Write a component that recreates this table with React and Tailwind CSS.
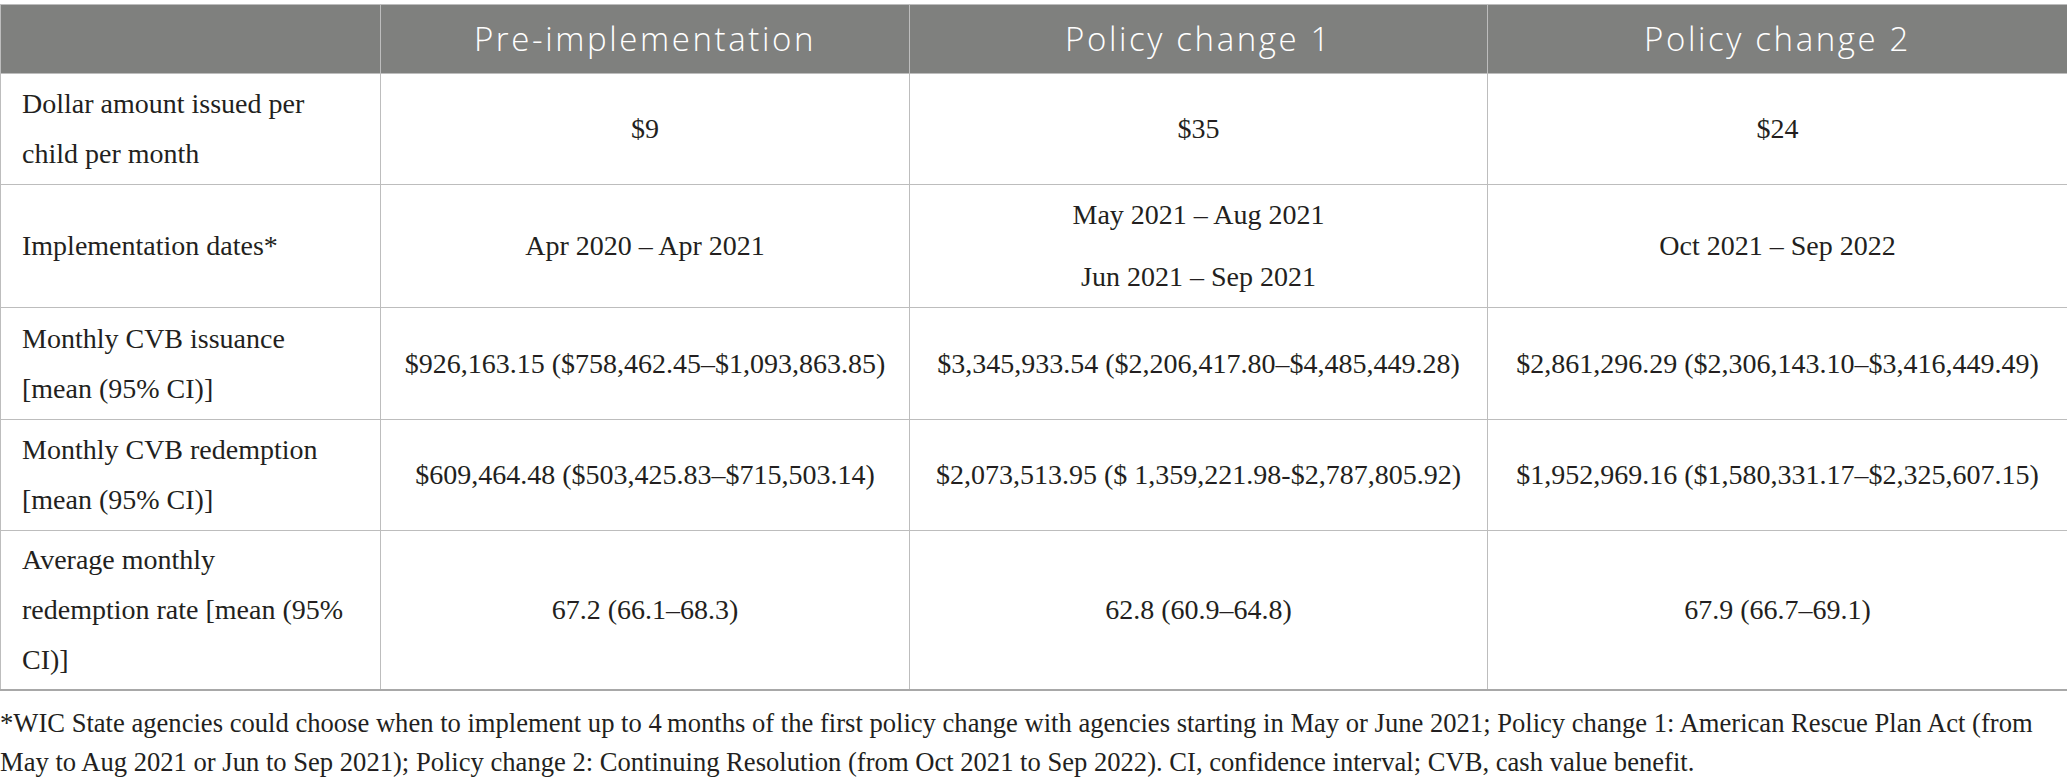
export default function App() {
  const serif = { fontFamily: '"Liberation Serif", "Times New Roman", serif' };
  const rows = [
    { h: 'h-[111px]', label: ['Dollar amount issued per', 'child per month'], vals: [['$9'], ['$35'], ['$24']] },
    { h: 'h-[123px]', label: ['Implementation dates*'], vals: [['Apr 2020 – Apr 2021'], ['May 2021 – Aug 2021', 'Jun 2021 – Sep 2021'], ['Oct 2021 – Sep 2022']] },
    { h: 'h-[112px]', label: ['Monthly CVB issuance', '[mean (95% CI)]'], vals: [['$926,163.15 ($758,462.45–$1,093,863.85)'], ['$3,345,933.54 ($2,206,417.80–$4,485,449.28)'], ['$2,861,296.29 ($2,306,143.10–$3,416,449.49)']] },
    { h: 'h-[111px]', label: ['Monthly CVB redemption', '[mean (95% CI)]'], vals: [['$609,464.48 ($503,425.83–$715,503.14)'], ['$2,073,513.95 ($ 1,359,221.98-$2,787,805.92)'], ['$1,952,969.16 ($1,580,331.17–$2,325,607.15)']] },
    { h: 'h-[159px]', label: ['Average monthly', 'redemption rate [mean (95%', 'CI)]'], vals: [['67.2 (66.1–68.3)'], ['62.8 (60.9–64.8)'], ['67.9 (66.7–69.1)']] },
  ];
  return (
    <div className="w-[2067px] bg-white pt-[4px]">
      <table className="w-[2067px] table-fixed border-collapse">
        <colgroup>
          <col className="w-[380px]" />
          <col className="w-[529px]" />
          <col className="w-[578px]" />
          <col className="w-[580px]" />
        </colgroup>
        <thead>
          <tr className="h-[69px] bg-[#7f807e]">
            {['', 'Pre-implementation', 'Policy change 1', 'Policy change 2'].map((t, i) => (
              <th
                key={i}
                className="border-[1.5px] border-[#bdbdbd] text-center align-middle text-[33px] font-[350] tracking-[2.6px] text-white"
                style={{ fontFamily: '"Open Sans", "Noto Sans", sans-serif' }}
              >
                {t}
              </th>
            ))}
          </tr>
        </thead>
        <tbody>
          {rows.map((r, ri) => (
            <tr key={ri} className={r.h}>
              <td
                className={`border-[1.5px] border-[#bdbdbd] pl-[21px] pr-2 align-middle text-[28px] leading-[50px] text-[#231f20] ${ri === 4 ? 'border-b-2 border-b-[#a8a8a8]' : ''}`}
                style={serif}
              >
                {r.label.map((l, li) => (
                  <div key={li}>{l}</div>
                ))}
              </td>
              {r.vals.map((v, vi) => (
                <td
                  key={vi}
                  className={`border-[1.5px] border-[#bdbdbd] text-center align-middle text-[28px] leading-[50px] text-[#231f20] ${ri === 4 ? 'border-b-2 border-b-[#a8a8a8]' : ''}`}
                  style={serif}
                >
                  <div className="flex flex-col gap-[12px]">
                    {v.map((l, li) => (
                      <div key={li}>{l}</div>
                    ))}
                  </div>
                </td>
              ))}
            </tr>
          ))}
        </tbody>
      </table>
      <div className="pt-[13px] text-[26.6px] leading-[39px] text-[#231f20]" style={serif}>
        <p className="whitespace-nowrap">*WIC State agencies could choose when to implement up to 4&#8239;months of the first policy change with agencies starting in May or June 2021; Policy change 1: American Rescue Plan Act (from</p>
        <p className="whitespace-nowrap">May to Aug 2021 or Jun to Sep 2021); Policy change 2: Continuing Resolution (from Oct 2021 to Sep 2022). CI, confidence interval; CVB, cash value benefit.</p>
      </div>
    </div>
  );
}
